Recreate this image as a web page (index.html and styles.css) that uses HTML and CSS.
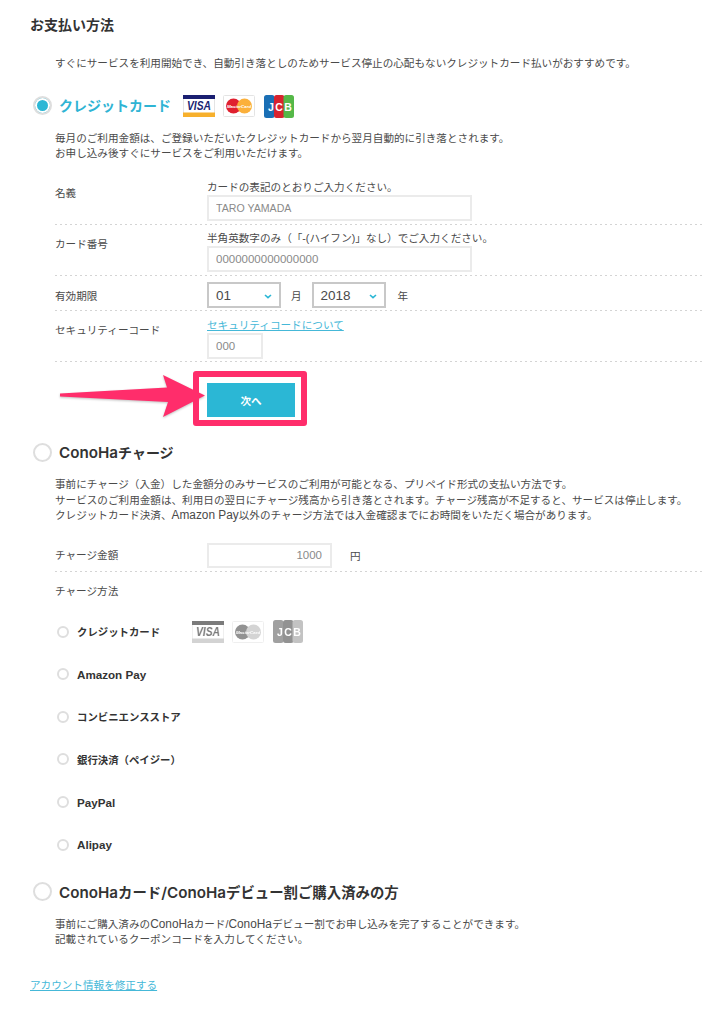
FILE: index.html
```html
<!DOCTYPE html>
<html lang="ja">
<head>
<meta charset="utf-8">
<title>お支払い方法</title>
<link rel="stylesheet" href="styles.css">
</head>
<body>
<main class="page">
  <h1 class="page-title">お支払い方法</h1>
  <p class="text intro">すぐにサービスを利用開始でき、自動引き落としのためサービス停止の心配もないクレジットカード払いがおすすめです。</p>

  <section class="method method-card">
    <div class="method-head">
      <span class="radio radio-on"></span>
      <h2 class="method-title method-title-on">クレジットカード</h2>
      <div class="brands brands-main">
        <svg class="brand" viewBox="0 0 32 22">
          <rect x=".5" y=".5" width="31" height="21" fill="#fff" stroke="#e4e4e4"/>
          <rect width="32" height="4" fill="#1a1f71"/>
          <rect y="17.5" width="32" height="4.5" fill="#f7b02c"/>
          <text x="4" y="15" class="visa-text" textLength="24" lengthAdjust="spacingAndGlyphs">VISA</text>
        </svg>
        <svg class="brand" viewBox="0 0 32 22">
          <rect x=".5" y=".5" width="31" height="21" rx="1" fill="#fff" stroke="#e4e4e4"/>
          <circle cx="10.5" cy="11" r="7.5" fill="#e0202f"/>
          <circle cx="21.5" cy="11" r="7.5" fill="#fbb03b"/>
          <text x="16" y="12.6" class="mc-text">MasterCard</text>
        </svg>
        <svg class="brand brand-jcb" viewBox="0 0 30 23">
          <rect width="10.5" height="23" rx="2.5" fill="#1a6fb5"/>
          <rect x="10" width="10.5" height="23" rx="2.5" fill="#d8232f"/>
          <rect x="19.5" width="10.5" height="23" rx="2.5" fill="#55b848"/>
          <text x="7" y="15.5" class="jcb-text">J</text>
          <text x="15" y="15.5" class="jcb-text">C</text>
          <text x="24" y="15.5" class="jcb-text">B</text>
        </svg>
      </div>
    </div>
    <div class="method-body">
      <p class="text method-desc desc-card">毎月のご利用金額は、ご登録いただいたクレジットカードから翌月自動的に引き落とされます。<br>お申し込み後すぐにサービスをご利用いただけます。</p>

      <div class="row row-first">
        <div class="label label-name">名義</div>
        <div class="field">
          <div class="hint">カードの表記のとおりご入力ください。</div>
          <input class="input input-wide input-name" value="TARO YAMADA">
        </div>
      </div>
      <div class="row row-number">
        <div class="label label-number">カード番号</div>
        <div class="field">
          <div class="hint">半角英数字のみ（「-(ハイフン)」なし）でご入力ください。</div>
          <input class="input input-wide input-number" value="0000000000000000">
        </div>
      </div>
      <div class="row row-expiry">
        <div class="label label-expiry">有効期限</div>
        <div class="field field-inline">
          <div class="select"><span>01</span><svg class="chevron" viewBox="0 0 8 5"><path d="M1 1l3 2.6L7 1" fill="none" stroke="#2bb7d5" stroke-width="1.6"/></svg></div>
          <span class="unit unit-month">月</span>
          <div class="select"><span>2018</span><svg class="chevron" viewBox="0 0 8 5"><path d="M1 1l3 2.6L7 1" fill="none" stroke="#2bb7d5" stroke-width="1.6"/></svg></div>
          <span class="unit unit-year">年</span>
        </div>
      </div>
      <div class="row row-code">
        <div class="label label-code">セキュリティーコード</div>
        <div class="field">
          <div class="hint"><a class="link" href="#">セキュリティコードについて</a></div>
          <input class="input input-code" value="000">
        </div>
      </div>

      <div class="next">
        <button class="btn" type="button">次へ</button>
        <svg class="arrow" viewBox="0 0 160 50" width="160" height="50" aria-hidden="true">
          <path class="arrow-shape" d="M3 21.5L110 15.5L106 3L148 23.5L106 45L111 30L3 24.5Z"/>
        </svg>
        <div class="callout"></div>
      </div>
    </div>
  </section>

  <section class="method method-charge">
    <div class="method-head">
      <span class="radio"></span>
      <h2 class="method-title"><span class="lat">ConoHa</span>チャージ</h2>
    </div>
    <div class="method-body">
      <p class="text method-desc desc-charge">事前にチャージ（入金）した金額分のみサービスのご利用が可能となる、プリペイド形式の支払い方法です。<br>サービスのご利用金額は、利用日の翌日にチャージ残高から引き落とされます。チャージ残高が不足すると、サービスは停止します。<br>クレジットカード決済、<span class="lat">Amazon Pay</span>以外のチャージ方法では入金確認までにお時間をいただく場合があります。</p>
      <div class="row row-amount">
        <div class="label">チャージ金額</div>
        <div class="field field-inline">
          <input class="input input-amount" value="1000">
          <span class="unit unit-yen">円</span>
        </div>
      </div>
      <div class="label label-method">チャージ方法</div>
      <ul class="options">
        <li class="option"><span class="radio-small"></span><span class="option-name option-name-card">クレジットカード</span>
          <div class="brands brands-muted">
            <svg class="brand" viewBox="0 0 32 22">
              <rect x=".5" y=".5" width="31" height="21" fill="#fff" stroke="#e4e4e4"/>
              <rect width="32" height="4" fill="#1a1f71"/>
              <rect y="17.5" width="32" height="4.5" fill="#f7b02c"/>
              <text x="4" y="15" class="visa-text" textLength="24" lengthAdjust="spacingAndGlyphs">VISA</text>
            </svg>
            <svg class="brand" viewBox="0 0 32 22">
              <rect x=".5" y=".5" width="31" height="21" rx="1" fill="#fff" stroke="#e4e4e4"/>
              <circle cx="10.5" cy="11" r="7.5" fill="#e0202f"/>
              <circle cx="21.5" cy="11" r="7.5" fill="#fbb03b"/>
              <text x="16" y="12.6" class="mc-text">MasterCard</text>
            </svg>
            <svg class="brand brand-jcb" viewBox="0 0 30 23">
              <rect width="10.5" height="23" rx="2.5" fill="#1a6fb5"/>
              <rect x="10" width="10.5" height="23" rx="2.5" fill="#d8232f"/>
              <rect x="19.5" width="10.5" height="23" rx="2.5" fill="#55b848"/>
              <text x="7" y="15.5" class="jcb-text">J</text>
              <text x="15" y="15.5" class="jcb-text">C</text>
              <text x="24" y="15.5" class="jcb-text">B</text>
            </svg>
          </div>
        </li>
        <li class="option"><span class="radio-small"></span><span class="option-name"><span class="lat">Amazon Pay</span></span></li>
        <li class="option"><span class="radio-small"></span><span class="option-name">コンビニエンスストア</span></li>
        <li class="option"><span class="radio-small"></span><span class="option-name">銀行決済（ペイジー）</span></li>
        <li class="option"><span class="radio-small"></span><span class="option-name"><span class="lat">PayPal</span></span></li>
        <li class="option"><span class="radio-small"></span><span class="option-name"><span class="lat">Alipay</span></span></li>
      </ul>
    </div>
  </section>

  <section class="method method-coupon">
    <div class="method-head">
      <span class="radio"></span>
      <h2 class="method-title method-title-long"><span class="lat">ConoHa</span>カード<span class="lat">/ConoHa</span>デビュー割ご購入済みの方</h2>
    </div>
    <div class="method-body">
      <p class="text method-desc desc-coupon">事前にご購入済みの<span class="lat">ConoHa</span>カード/<span class="lat">ConoHa</span>デビュー割でお申し込みを完了することができます。<br>記載されているクーポンコードを入力してください。</p>
    </div>
  </section>

  <a class="link back-link" href="#">アカウント情報を修正する</a>
</main>
</body>
</html>
```

FILE: styles.css
```css
* { box-sizing: border-box; }

html, body { margin: 0; padding: 0; background: #fff; }

body {
  font-family: "Liberation Sans", "Noto Sans CJK JP", sans-serif;
  font-size: 10.6px;
  color: #4a4a4a;
  text-spacing-trim: space-all;
}

.page {
  width: 705px;
  height: 1024px;
  padding: 10px 2px 0 30px;
  overflow: hidden;
}

.lat { font-size: 1.12em; }

.page-title {
  margin: 0;
  font-size: 14px;
  line-height: 30px;
  font-weight: 700;
  color: #333;
}

.text {
  margin: 0;
  font-size: 10.6px;
  line-height: 15.3px;
}

.intro { margin: 16px 0 0 25px; }

.method-card { margin-top: 24px; }
.method-charge { margin-top: 20px; }
.method-coupon { margin-top: 26px; }

.method-head {
  display: flex;
  align-items: center;
  height: 22px;
  margin-left: 3px;
}

.radio {
  flex: none;
  width: 19px;
  height: 19px;
  border: 2px solid #dedede;
  border-radius: 50%;
  background: #fff;
  margin-right: 7px;
  margin-top: -2px;
}

.radio-on {
  background: #2bb7d5;
  box-shadow: inset 0 0 0 2px #fff;
}

.method-title {
  margin: 0;
  font-size: 14px;
  line-height: 22px;
  font-weight: 700;
  color: #333;
}

.method-title-long { font-size: 14.4px; }

.method-title .lat {
  font-family: Inter, "Liberation Sans", sans-serif;
  font-size: 15.2px;
  font-weight: 600;
}

.method-title-on { color: #2fb4d4; }

.brands { display: flex; align-items: center; }
.brands-main { margin-left: 12px; }

.brand {
  display: block;
  width: 32px;
  height: 22px;
  margin-right: 8px;
}

.brand-jcb { width: 30px; height: 23px; margin-right: 0; margin-left: 1px; }

.brands-muted {
  margin-left: 32px;
  filter: grayscale(1);
  opacity: .6;
}

.visa-text {
  font: italic 700 12px "Liberation Sans", sans-serif;
  fill: #1a1f71;
}

.mc-text {
  font: italic 700 4.4px "Liberation Sans", sans-serif;
  fill: #fff;
  text-anchor: middle;
}

.jcb-text {
  font: 700 10.5px "Liberation Sans", sans-serif;
  fill: #fff;
  text-anchor: middle;
}

.method-body { padding-left: 25px; }

.method-desc { margin-top: 13px; }
.desc-card { margin-top: 14px; line-height: 15px; }

/* widely spaced dots along each row's bottom edge */
.row {
  display: grid;
  grid-template-columns: 152px 1fr;
  padding: 6px 0 3px;
  background: repeating-linear-gradient(90deg, #d4d4d4 0 2px, transparent 2px 5px) left bottom / 100% 1px no-repeat;
}

.row-first { margin-top: 12px; padding: 7px 0 4px; }
.row-number { padding: 6px 0 4px; }
.row-code { padding-top: 7px; }

.label {
  font-size: 10.6px;
  line-height: 15px;
  align-self: center;
}

.label-name { align-self: start; padding-top: 6px; }
.label-number { align-self: start; padding-top: 6px; }
.label-expiry { padding-top: 3px; }
.label-code { align-self: start; padding-top: 5px; }

.hint { font-size: 10.6px; line-height: 15px; height: 15px; }

.input {
  display: block;
  height: 26px;
  margin: 0;
  padding: 0 7px;
  border: 2px solid #ebebeb;
  border-radius: 0;
  background: #fff;
  font-family: inherit;
  font-size: 10.6px;
  color: #8a8a8a;
  outline: none;
}

.input-wide { width: 265px; }
.input-number { font-size: 11.5px; }
.input-code { width: 56px; font-size: 11.5px; }
.input-amount { width: 125px; padding-right: 8px; text-align: right; font-size: 11.5px; height: 25px; }

.field-inline { display: flex; align-items: center; }

.select {
  display: flex;
  align-items: center;
  justify-content: space-between;
  width: 74px;
  height: 26px;
  padding: 0 7px;
  border: 2px solid #c8c8c8;
  font-size: 13.5px;
  color: #4a4a4a;
}

.chevron { width: 8px; height: 5px; margin-top: 2px; }

.unit { font-size: 10.6px; }
.unit-month { margin: 0 10px; }
.unit-year { margin-left: 12px; }
.unit-yen { margin-left: 18px; }

.link { color: #45b8d8; text-decoration: underline; }

.next {
  position: relative;
  height: 60px;
  padding: 21px 0 0 152px;
}

.btn {
  display: block;
  width: 88px;
  height: 34px;
  padding: 0;
  border: 0;
  background: #2bb7d5;
  color: #fff;
  font-family: inherit;
  font-size: 10.6px;
  font-weight: 700;
}

/* annotation drawn over the form */
.callout {
  position: absolute;
  left: 138px;
  top: 9px;
  width: 114px;
  height: 55px;
  border: 6px solid #ff2d6b;
  border-radius: 3px;
  pointer-events: none;
}

.arrow {
  position: absolute;
  left: 2px;
  top: 9.5px;
  overflow: visible;
}

.arrow-shape {
  fill: #ff2d6b;
  filter: drop-shadow(0 1px 1px rgba(0, 0, 0, .25));
}

.row-amount { margin-top: 19.5px; padding: 0 0 4px; }
.label-method { margin-top: 12px; }

.options {
  list-style: none;
  margin: 22px 0 0;
  padding: 0;
  display: flex;
  flex-direction: column;
  gap: 20.6px;
}

.option {
  display: flex;
  align-items: center;
  height: 22px;
  padding-left: 2px;
}

.radio-small {
  flex: none;
  width: 12px;
  height: 12px;
  border: 2px solid #dedede;
  border-radius: 50%;
  margin-right: 8px;
}

.option-name {
  font-size: 10.4px;
  font-weight: 700;
  color: #333;
}

.back-link {
  display: block;
  width: max-content;
  margin-top: 31px;
  font-size: 10.6px;
  line-height: 15px;
}
```
